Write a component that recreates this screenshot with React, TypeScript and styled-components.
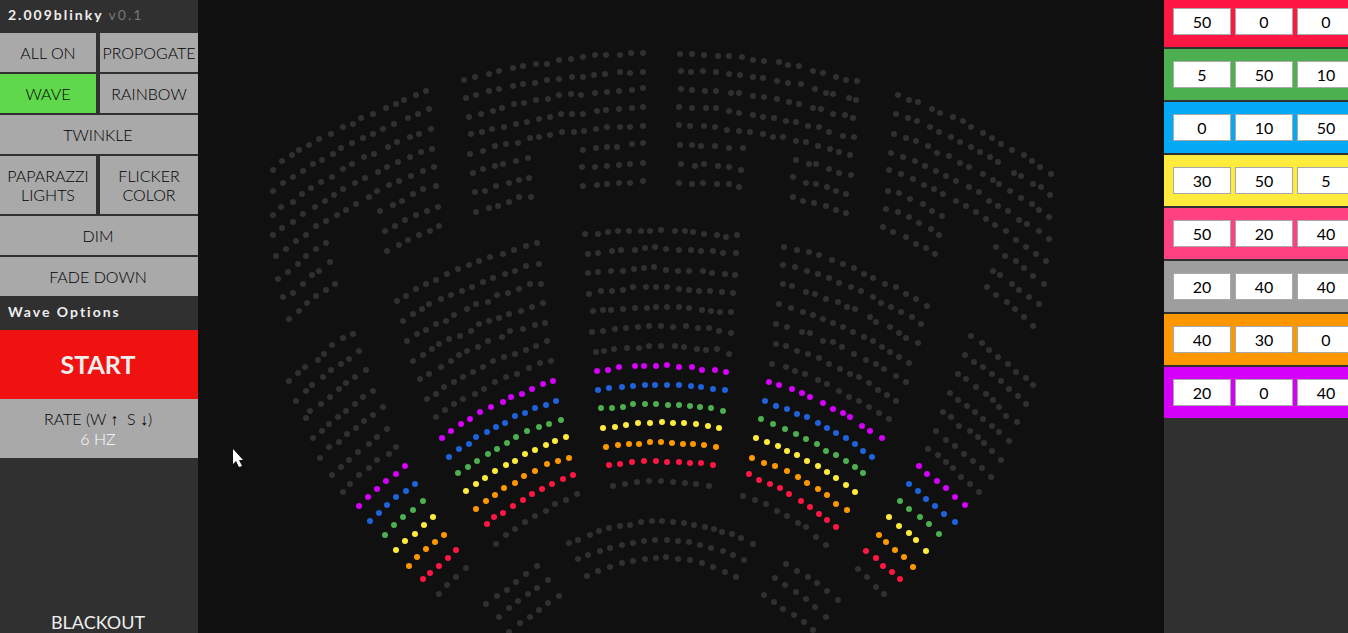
import React, { useState } from "react";
import styled, { createGlobalStyle } from "styled-components";

const GlobalStyle = createGlobalStyle`
  *, *::before, *::after { box-sizing: border-box; }
  body {
    margin: 0;
    background: #101010;
    font-family: Lato, "Liberation Sans", sans-serif;
    font-size: 16px;
    overflow: hidden;
  }
  button, input { font: inherit; border-radius: 0; }
`;

const Page = styled.div`
  display: grid;
  grid-template-columns: 198px minmax(0, 1fr) 184px;
  height: 100vh;
`;

const Sidebar = styled.aside`
  display: flex;
  flex-direction: column;
  background: #303030;
  color: #eee;
  overflow: hidden;
`;

const Title = styled.h1`
  flex: none;
  margin: 0;
  padding: 5px 8px 8px;
  font-size: 14px;
  line-height: 20px;
  font-weight: 700;
  letter-spacing: 2px;
  white-space: nowrap;
`;

const SectionTitle = styled(Title).attrs({ as: "h2" })`
  padding: 6px 8px 8px;
`;

const Version = styled.span`
  color: #777;
  font-weight: 400;
`;

const Modes = styled.div`
  display: grid;
  grid-template-columns: 96px minmax(0, 1fr);
  gap: 2px 4px;
`;

const ModeButton = styled.button<{ $wide?: boolean; $active?: boolean }>`
  grid-column: ${(p) => (p.$wide ? "1 / -1" : "auto")};
  border: 0;
  padding: ${(p) => (p.$wide ? "10px 2px 10px 0" : "10px 0")};
  background: ${(p) => (p.$active ? "#60d84c" : "#a9a9a9")};
  color: #000;
  font-weight: 300;
  line-height: 19px;
  text-transform: uppercase;
`;

const StartButton = styled.button`
  flex: none;
  border: 0;
  padding: 0 2px 2px 0;
  height: 69px;
  background: #f01111;
  color: #eee;
  font-size: 25px;
  font-weight: 700;
`;

const Rate = styled.div`
  flex: none;
  padding: 10px 2px 9px 0;
  background: #a9a9a9;
  color: #000;
  font-weight: 300;
  line-height: 20px;
  text-align: center;
`;

const Arrow = styled.span`
  font-family: "Liberation Serif", serif;
  line-height: 1;
`;

const RateValue = styled.output`
  display: block;
  color: #fff;
`;

const BlackoutButton = styled.button`
  margin-top: auto;
  border: 0;
  padding: 0 2px 0 0;
  background: transparent;
  color: #eee;
  font-size: 18px;
  line-height: 22px;
`;

const Stage = styled.main`
  min-width: 0;
  background: #101010;
`;

const SeatMap = styled.svg`
  display: block;
  width: 100%;
  height: 100%;
`;

const Palette = styled.aside`
  display: flex;
  flex-direction: column;
  gap: 2px;
  background: #303030;
  overflow: hidden;
`;

const Swatch = styled.div<{ $color: string }>`
  display: flex;
  flex: none;
  gap: 4px;
  padding: 12px 9px;
  background: ${(p) => p.$color};

  &:first-child {
    padding-top: 8px;
  }
`;

const Channel = styled.input`
  flex: none;
  width: 58px;
  height: 27px;
  padding: 0;
  border: 1px solid #a9a9a9;
  background: #fff;
  color: #000;
  text-align: center;
`;

const modes: { label: string; wide?: boolean }[] = [
  { label: "All on" },
  { label: "Propogate" },
  { label: "Wave" },
  { label: "Rainbow" },
  { label: "Twinkle", wide: true },
  { label: "Paparazzi lights" },
  { label: "Flicker color" },
  { label: "Dim", wide: true },
  { label: "Fade down", wide: true },
];

const swatches = [
  { name: "Red", color: "#ff1744", rgb: [50, 0, 0] },
  { name: "Green", color: "#4caf50", rgb: [5, 50, 10] },
  { name: "Blue", color: "#03a9f4", rgb: [0, 10, 50] },
  { name: "Yellow", color: "#ffeb3b", rgb: [30, 50, 5] },
  { name: "Pink", color: "#ff4081", rgb: [50, 20, 40] },
  { name: "White", color: "#9e9e9e", rgb: [20, 40, 40] },
  { name: "Orange", color: "#ff9800", rgb: [40, 30, 0] },
  { name: "Purple", color: "#d500f9", rgb: [20, 0, 40] },
];

/* Seat centres, one string per row of the auditorium, grouped by light colour. */
const seats: Record<string, string[]> = {
  "#303030": [
    // balcony, far left
    "273,170 282,161 292,155 299,150 309,145 319,139 331,134 343,127 353,124 361,118 373,114 386,108 396,104 404,100 416,95 426,91",
    "273,191 283,183 293,177 303,171 313,164 322,160 333,154 341,148 352,143 363,138 373,134 383,129 394,124 408,118 418,114 429,109",
    "273,215 281,207 293,202 302,194 311,188 321,182 332,177 343,169 352,164 364,157 374,154 388,147 397,142 410,137 419,134 431,129",
    "273,235 282,228 293,222 303,214 315,207 325,201 334,195 343,189 355,183 365,178 378,172 387,167 398,162 410,157 421,152 432,149",
    "276,256 286,249 296,241 306,235 316,226 326,221 337,215 346,210 356,204 369,197 377,191 389,185 399,181 411,176 423,171 434,167",
    "278,279 288,272 298,264 306,256 316,249 326,243 380,211 393,205 402,201 413,194 423,189 436,186",
    "283,297 293,293 303,284 312,275 319,271 330,262 385,231 395,226 405,220 416,215 427,211 438,207",
    "289,319 299,311 307,303 316,296 326,290 335,284 387,251 399,245 408,240 419,235 430,231 439,226",
    // balcony, centre left
    "464,80 475,77 489,74 499,71 513,68 523,66 536,64 547,64 559,60 571,59 583,57 595,55 606,55 620,55 631,53 643,53",
    "466,98 476,95 489,91 499,89 513,86 523,84 535,83 547,80 559,79 572,77 583,77 594,75 605,74 620,72 630,73 643,72",
    "469,117 481,114 493,111 502,108 514,104 524,103 536,100 548,99 559,95 571,94 581,95 595,93 607,92 619,91 632,90 643,88",
    "471,134 482,132 492,129 504,127 516,124 527,122 539,119 550,117 561,114 572,114 583,114 597,111 606,110 619,109 632,108 643,107",
    "470,154 483,151 495,146 506,144 518,143 530,138 539,137 550,135 562,132 574,132 584,131 596,129 607,127 620,127 630,127 643,126",
    "473,173 483,169 495,166 503,164 516,161 528,158 583,150 596,148 607,147 617,147 632,144 643,143",
    "475,192 485,191 496,186 509,183 519,180 529,178 582,167 595,167 607,166 619,165 630,164 643,163",
    "476,212 489,208 498,206 509,202 519,197 531,197 583,186 597,185 607,184 619,183 630,183 643,181",
    // balcony, centre right
    "680,54 692,54 704,55 718,56 729,56 742,57 753,60 764,61 779,62 788,65 799,66 813,71 823,73 836,77 846,80 857,81",
    "681,71 691,72 703,71 716,72 729,74 740,75 753,77 763,78 777,81 788,83 801,84 815,89 826,93 833,94 849,98 856,100",
    "681,89 692,90 705,91 716,91 731,93 739,93 753,96 764,97 777,99 789,102 799,104 813,108 821,109 833,114 845,115 853,118",
    "679,107 692,108 706,108 716,108 729,111 739,113 753,115 763,117 774,118 786,121 796,122 808,126 819,127 829,132 843,136 854,137",
    "679,125 690,126 704,126 715,127 727,130 739,131 750,132 763,134 773,137 783,137 796,141 806,142 818,146 830,149 839,152 850,155",
    "680,145 692,145 701,146 715,146 729,148 743,148 796,160 809,164 816,164 829,169 839,173 851,175",
    "681,164 695,166 704,164 718,166 729,167 741,170 793,177 806,183 816,184 827,187 836,191 846,194",
    "679,183 692,184 703,183 717,184 729,184 739,187 793,197 803,201 814,203 826,206 836,210 846,213",
    // balcony, far right
    "898,95 909,100 918,102 932,109 940,113 953,117 963,121 971,127 983,133 992,138 1001,144 1012,150 1024,155 1032,161 1040,167 1051,174",
    "896,114 908,118 917,121 930,127 939,132 951,137 960,142 971,147 980,152 990,157 998,162 1014,173 1021,176 1033,184 1041,187 1050,195",
    "894,134 906,138 916,141 928,146 937,153 949,156 960,163 969,167 983,174 993,180 999,184 1010,191 1021,198 1032,204 1039,210 1049,217",
    "891,153 903,157 915,161 925,166 936,171 946,176 956,181 969,187 979,192 989,201 998,206 1008,211 1019,220 1027,224 1039,231 1049,239",
    "889,170 901,174 913,179 924,185 934,189 943,194 956,201 966,206 976,212 986,219 995,225 1006,231 1016,240 1026,247 1036,254 1046,261",
    "888,191 899,193 910,199 923,204 932,211 942,216 996,247 1005,256 1016,261 1024,268 1033,276 1044,284",
    "886,209 898,212 909,217 919,223 931,229 939,235 993,271 1000,275 1012,284 1019,290 1029,297 1039,304",
    "883,227 893,232 906,237 916,244 926,248 935,254 987,287 996,295 1007,302 1015,309 1024,317 1033,326",
    // stalls, left wing
    "289,381 298,373 305,367 318,360 324,354 332,345 343,338 353,334",
    "296,401 306,391 312,385 323,377 331,370 341,364 349,359 359,351",
    "306,418 310,411 321,404 330,397 339,389 346,383 355,377 366,370",
    "313,438 322,431 329,424 338,417 346,411 355,404 363,397 373,391",
    "320,458 329,447 339,442 347,434 356,428 364,421 373,415 383,407",
    "332,475 341,467 349,460 358,452 369,444 377,437 387,429",
    "343,492 350,484 359,475 369,468 377,460 389,454 396,447",
    "439,594 447,585 456,577 466,568",
    // stalls, left
    "397,301 406,296 416,289 426,284 436,280 447,274 458,269 469,265 479,261 490,257 503,254 514,250 526,246 537,243",
    "403,321 413,314 422,309 429,304 441,299 451,295 462,291 472,287 483,282 493,278 505,274 515,271 526,266 539,264",
    "407,341 417,334 426,330 436,324 446,321 454,315 467,309 476,304 488,302 497,295 508,293 519,289 530,284 541,284",
    "413,361 423,355 432,349 439,344 449,339 460,336 471,331 479,324 489,321 499,318 509,314 521,311 532,307 543,303",
    "420,379 429,374 441,367 451,361 459,355 467,351 478,347 488,341 502,337 510,331 523,329 535,325 545,323",
    "427,399 436,394 444,387 454,382 463,377 473,372 483,367 493,361 504,357 515,354 526,350 536,346 547,341",
    "436,417 445,410 454,404 463,399 475,394 484,389 495,382 506,377 517,374 529,368 540,363 551,361",
    "496,544 506,535 515,529 525,522 535,516 546,511 555,504 566,500 577,494",
    // stalls, centre
    "585,234 598,234 608,232 618,231 629,231 641,231 650,231 661,230 675,231 685,231 693,232 704,234 717,235 726,237 737,235",
    "588,254 598,253 612,251 621,250 635,250 645,248 655,247 666,249 679,250 691,250 701,251 713,251 723,253 736,253",
    "588,273 598,272 611,271 623,271 634,269 644,268 654,267 666,270 678,271 689,271 703,271 712,273 725,274 735,275",
    "589,294 601,291 612,291 623,290 633,287 646,287 656,287 667,287 679,289 689,290 699,291 710,291 722,292 733,293",
    "593,311 603,310 611,310 623,309 635,308 647,308 656,307 667,307 679,307 689,308 702,310 711,311 720,312 731,312",
    "592,332 603,331 615,329 626,328 638,327 649,326 661,326 673,327 686,326 698,328 709,328 719,331 731,333",
    "596,352 604,351 614,349 627,348 639,348 649,346 661,346 675,346 684,347 697,349 706,350 717,349 729,354",
    "613,486 625,484 637,482 649,481 661,481 673,482 685,483 696,484 709,486",
    // stalls, right
    "784,247 797,250 809,252 819,255 832,260 843,264 854,268 864,274 873,278 885,284 896,287 906,294 916,299 927,306",
    "783,265 795,267 807,271 818,274 829,278 839,283 851,287 861,291 873,297 881,303 891,307 901,312 912,317 921,324",
    "783,284 792,286 806,292 815,294 826,299 838,302 847,307 855,309 870,317 876,322 890,327 899,333 906,338 918,343",
    "779,304 791,308 803,312 813,315 823,319 833,323 843,327 853,332 864,337 873,341 882,347 890,352 899,357 909,363",
    "776,324 787,327 802,332 810,333 823,341 833,342 842,347 854,354 866,360 876,364 884,369 896,376 906,382",
    "776,344 786,346 797,351 808,354 819,358 829,364 840,369 850,374 859,377 869,383 878,390 887,395 896,401",
    "772,364 786,367 795,371 805,374 818,380 827,384 839,391 849,397 859,401 869,407 879,413 889,419",
    "743,496 755,500 766,504 777,511 787,516 798,523 806,527 816,537 826,545",
    // stalls, right wing
    "971,336 982,343 989,350 998,357 1008,364 1016,372 1026,378 1033,385",
    "965,355 974,362 983,367 992,374 1001,381 1009,389 1018,396 1026,404",
    "958,374 966,379 976,387 986,394 993,400 999,407 1006,416 1017,422",
    "950,393 958,400 967,406 975,412 983,419 992,426 999,432 1009,441",
    "943,412 951,417 959,426 970,431 978,437 984,443 992,451 1001,460",
    "936,431 946,440 955,446 964,454 973,461 982,468 991,477",
    "928,449 938,455 946,462 953,468 961,477 970,484 979,492",
    "858,569 867,577 876,587 884,594",
    // front block
    "569,543 578,540 590,535 599,531 609,528 620,526 630,525 641,522 652,521 662,521 673,522 684,523 694,525 705,527 714,529 722,532 732,534 741,538 753,544",
    "578,559 588,555 600,551 610,548 622,545 633,543 644,541 655,540 667,540 678,541 689,542 700,545 711,548 723,551 733,555 744,560",
    "587,576 598,571 610,567 622,563 633,561 645,559 656,558 666,557 678,559 690,560 702,563 713,567 725,572 736,577",
    "486,604 497,596 507,590 516,582 526,574 537,566",
    "499,617 509,608 518,601 528,594 537,588 548,580",
    "509,632 520,623 530,617 539,610 548,603 559,596",
    "786,564 797,571 808,577 817,583 827,591 838,600",
    "775,578 785,585 796,592 806,599 815,607 826,617",
    "764,595 774,602 783,609 794,615 804,622 813,630",
  ],
  "#d500f9": [
    "359,506 368,497 377,489 386,481 396,474 405,466",
    "442,438 451,431 461,424 470,419 480,412 491,407 503,402 511,397 522,394 532,389 543,384 553,381",
    "597,371 608,370 619,367 635,366 644,366 656,366 667,365 679,367 692,367 702,370 715,370 726,372",
    "769,382 779,385 792,389 802,393 810,397 823,403 833,409 843,413 850,417 862,426 870,431 882,438",
    "919,466 927,474 937,481 946,488 955,497 965,505",
  ],
  "#1f62dc": [
    "370,521 379,513 387,505 396,497 406,491 415,484",
    "449,457 459,449 469,444 476,437 487,432 496,427 505,423 515,416 525,413 535,408 546,405 556,401",
    "598,390 609,388 622,387 633,386 645,385 655,385 667,385 679,385 691,386 701,387 713,389 725,390",
    "765,401 776,406 787,409 797,414 807,417 818,423 827,428 836,433 846,438 855,444 863,451 872,457",
    "909,484 918,491 926,499 935,506 944,514 955,522",
  ],
  "#4caf50": [
    "385,535 394,525 403,517 413,510 423,501",
    "458,473 468,467 477,461 488,454 497,449 507,443 516,437 527,431 539,427 549,424 561,420",
    "601,408 612,408 623,407 633,404 645,404 656,404 668,405 679,405 690,406 700,407 711,408 723,411",
    "761,419 773,424 785,429 796,434 806,439 817,444 826,451 836,455 846,461 855,467 863,473",
    "900,501 909,509 920,517 929,524 939,534",
  ],
  "#ffeb3b": [
    "396,550 405,541 415,534 424,525 433,517",
    "466,491 476,484 485,478 495,471 506,465 515,461 525,454 535,450 546,445 555,441 566,437",
    "603,428 615,427 626,425 638,423 650,423 662,422 673,423 684,423 696,424 708,426 719,428",
    "756,438 767,442 778,446 787,451 797,455 807,461 818,466 827,472 836,478 846,485 855,492",
    "889,517 899,526 909,533 916,540 926,551",
  ],
  "#ff9800": [
    "409,566 417,557 426,549 435,542 444,535",
    "476,509 486,501 495,495 504,488 515,483 524,476 535,471 547,464 558,461 569,458",
    "606,447 618,445 629,444 639,444 650,442 661,442 672,443 683,444 693,444 704,445 716,447",
    "752,458 764,463 775,466 787,471 798,477 807,483 818,489 827,495 836,504 847,510",
    "879,535 886,542 895,550 904,557 913,567",
  ],
  "#ff1744": [
    "423,579 430,573 439,566 448,558 456,550",
    "487,524 494,517 503,513 513,506 523,500 532,494 542,489 552,484 563,479 573,475",
    "609,465 620,464 632,462 644,461 656,461 667,462 679,462 690,463 701,463 713,465",
    "749,474 759,480 770,484 780,488 789,494 801,501 810,507 819,514 827,520 836,527",
    "866,551 876,558 883,566 892,572 900,579",
  ],
};

function Seats() {
  return (
    <>
      {Object.entries(seats).map(([color, rows]) => (
        <g key={color} fill={color}>
          {rows.flatMap((row) =>
            row.split(" ").map((seat) => {
              const [x, y] = seat.split(",");
              return <circle key={seat} cx={x} cy={y} r={3} />;
            })
          )}
        </g>
      ))}
    </>
  );
}

export default function App() {
  const [mode, setMode] = useState("Wave");

  return (
    <>
      <GlobalStyle />
      <Page>
        <Sidebar>
          <Title>
            2.009blinky <Version>v0.1</Version>
          </Title>
          <Modes>
            {modes.map((m) => (
              <ModeButton
                key={m.label}
                type="button"
                $wide={m.wide}
                $active={m.label === mode}
                aria-pressed={m.label === mode}
                onClick={() => setMode(m.label)}
              >
                {m.label}
              </ModeButton>
            ))}
          </Modes>
          <SectionTitle>{mode} Options</SectionTitle>
          <StartButton type="button">START</StartButton>
          <Rate>
            RATE (W <Arrow>↑</Arrow> &nbsp;S <Arrow>↓</Arrow>)
            <RateValue>6 HZ</RateValue>
          </Rate>
          <BlackoutButton type="button">BLACKOUT</BlackoutButton>
        </Sidebar>

        <Stage>
          <SeatMap viewBox="198 0 966 633" role="img" aria-label="Auditorium seats">
            <Seats />
            <path
              d="M233 449v15l3-3 3 6 3-1-3-6h4z"
              fill="#fff"
            />
          </SeatMap>
        </Stage>

        <Palette>
          {swatches.map((s) => (
            <Swatch key={s.name} $color={s.color}>
              {s.rgb.map((value, i) => (
                <Channel
                  key={i}
                  type="text"
                  defaultValue={value}
                  aria-label={`${s.name} swatch, ${["red", "green", "blue"][i]}`}
                />
              ))}
            </Swatch>
          ))}
        </Palette>
      </Page>
    </>
  );
}
